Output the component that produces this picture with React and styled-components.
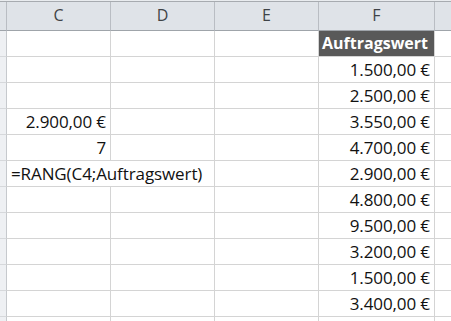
import React from "react";
import styled, { createGlobalStyle } from "styled-components";

const GlobalStyle = createGlobalStyle`
  html, body {
    margin: 0;
    padding: 0;
    background: #fff;
    overflow: hidden;
  }
`;

const rows = [
  { f: "Auftragswert", head: true },
  { f: "1.500,00 €" },
  { f: "2.500,00 €" },
  { c: "2.900,00 €", f: "3.550,00 €" },
  { c: "7", f: "4.700,00 €" },
  { formula: "=RANG(C4;Auftragswert)", f: "2.900,00 €" },
  { f: "4.800,00 €" },
  { f: "9.500,00 €" },
  { f: "3.200,00 €" },
  { f: "1.500,00 €" },
  { f: "3.400,00 €" },
  {},
];

export default function App() {
  return (
    <>
      <GlobalStyle />
      <Sheet>
        <TopEdge />
        <Grid>
          <ColHead $corner />
          <ColHead>C</ColHead>
          <ColHead>D</ColHead>
          <ColHead>E</ColHead>
          <ColHead>F</ColHead>
          <ColHead $last />

          {rows.map((r, i) => (
            <React.Fragment key={i}>
              <RowHead />
              {r.formula ? (
                <Cell $span={2}>{r.formula}</Cell>
              ) : (
                <>
                  <Cell $right>{r.c}</Cell>
                  <Cell />
                </>
              )}
              <Cell />
              <Cell $right={!r.head} $head={r.head}>
                {r.f}
              </Cell>
              <Cell $last />
            </React.Fragment>
          ))}
        </Grid>
      </Sheet>
    </>
  );
}

const Sheet = styled.div`
  width: 451px;
  height: 321px;
  overflow: hidden;
  font-family: "Open Sans", "Noto Sans", sans-serif;
`;

const TopEdge = styled.div`
  height: 1px;
  background: #e9ecef;
  border-bottom: 1px solid #a7abb0;
`;

const Grid = styled.div`
  display: grid;
  grid-template-columns: 7px 104px 104px 104px 116px 1fr;
  grid-template-rows: 29px;
  grid-auto-rows: 26px;
`;

const ColHead = styled.div`
  box-sizing: border-box;
  background: #dfe3e8;
  border-bottom: 1px solid #9fa4aa;
  border-right: ${(p) => (p.$last ? "none" : "1px solid #b9bdc3")};
  display: flex;
  align-items: center;
  justify-content: center;
  padding-bottom: 2px;
  font-size: 16px;
  color: #3f4347;
`;

const RowHead = styled.div`
  box-sizing: border-box;
  background: #eef0f3;
  border-right: 1px solid #c6c9cd;
  border-bottom: 1px solid #d6d8db;
`;

const Cell = styled.div`
  box-sizing: border-box;
  grid-column: span ${(p) => p.$span || 1};
  border-right: ${(p) => (p.$last ? "none" : "1px solid #d4d4d4")};
  border-bottom: 1px solid #d4d4d4;
  display: flex;
  align-items: center;
  justify-content: ${(p) => (p.$right || p.$head ? "flex-end" : "flex-start")};
  padding: 0 ${(p) => (p.$head ? "6px" : "4px")} 1px 4px;
  font-size: ${(p) => (p.$head ? "16px" : "17px")};
  font-weight: ${(p) => (p.$head ? 700 : 400)};
  color: ${(p) => (p.$head ? "#fff" : "#111")};
  background: ${(p) => (p.$head ? "#595959" : "#fff")};
  white-space: nowrap;
  overflow: hidden;
  letter-spacing: ${(p) => (p.$head ? "0" : "-0.1px")};
`;
